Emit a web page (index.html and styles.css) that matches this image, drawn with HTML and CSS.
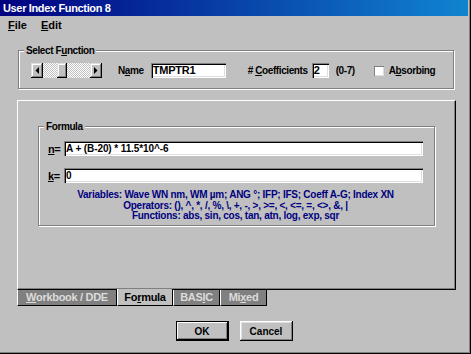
FILE: index.html
```html
<!DOCTYPE html>
<html lang="en">
<head>
    <meta charset="UTF-8">
    <title>User Index Function 8</title>
    <link rel="stylesheet" href="styles.css">
</head>
<body>
    <div class="window">
        <div class="titlebar">User Index Function 8</div>
        <div class="menubar">
            <span><u>F</u>ile</span>
            <span><u>E</u>dit</span>
        </div>

        <fieldset class="group select-group">
            <legend>Select F<u>u</u>nction</legend>
            <div class="select-row">
                <div class="scrollbar">
                    <div class="scroll-btn">
                        <svg width="4" height="7" viewBox="0 0 4 7"><path d="M4 0v7L0.5 3.5z"/></svg>
                    </div>
                    <div class="scroll-track"><div class="scroll-thumb"></div></div>
                    <div class="scroll-btn">
                        <svg width="4" height="7" viewBox="0 0 4 7"><path d="M0 0v7l3.5-3.5z"/></svg>
                    </div>
                </div>
                <span class="name-label">N<u>a</u>me</span>
                <div class="textbox name-box">TMPTR1</div>
                <span class="coef-label"># <u>C</u>oefficients</span>
                <div class="textbox coef-box">2</div>
                <span class="range">(0-7)</span>
                <span class="checkbox"></span>
                <span class="check-label">A<u>b</u>sorbing</span>
            </div>
        </fieldset>

        <div class="tabs">
            <div class="tab-page">
                <fieldset class="group formula-group">
                    <legend>Formula</legend>
                    <div class="field-row">
                        <span class="field-label"><u>n</u>=</span>
                        <div class="textbox formula-box">A + (B-20) * 11.5*10^-6</div>
                    </div>
                    <div class="field-row">
                        <span class="field-label"><u>k</u>=</span>
                        <div class="textbox formula-box">0</div>
                    </div>
                    <div class="help">
                        <div>Variables: Wave WN nm, WM µm; ANG °; IFP; IFS; Coeff A-G; Index XN</div>
                        <div>Operators: (), ^, *, /, %, \, +, -, &gt;, &gt;=, &lt;, &lt;=, =, &lt;&gt;, &amp;, |</div>
                        <div>Functions: abs, sin, cos, tan, atn, log, exp, sqr</div>
                    </div>
                </fieldset>
            </div>
            <div class="tab-strip">
                <div class="tab tab-workbook"><u>W</u>orkbook / DDE</div>
                <div class="tab tab-formula active">Fo<u>r</u>mula</div>
                <div class="tab tab-basic">BAS<u>I</u>C</div>
                <div class="tab tab-mixed">Mi<u>x</u>ed</div>
            </div>
        </div>

        <div class="buttons">
            <button class="btn default">OK</button>
            <button class="btn">Cancel</button>
        </div>
    </div>
</body>
</html>
```

FILE: styles.css
```css
* {
    box-sizing: border-box;
}

body {
    margin: 0;
    background-color: #c0c0c0;
    font-family: "Liberation Sans", Arial, sans-serif;
    font-weight: bold;
    font-size: 10px;
    letter-spacing: -0.4px;
    color: #000;
}

.window {
    width: 471px;
    height: 354px;
    padding: 0 3px 2px 0;
    display: flex;
    flex-direction: column;
    box-shadow: inset -1px -1px #000, inset -2px -2px #808080;
}

.titlebar {
    height: 16px;
    line-height: 16px;
    padding-left: 3px;
    color: #fff;
    font-size: 11px;
    letter-spacing: -0.35px;
    background: linear-gradient(to right, #000080, #1084d0);
}

.menubar {
    height: 18px;
    display: flex;
    align-items: center;
    gap: 14px;
    padding-left: 8px;
    font-size: 11px;
    letter-spacing: 0;
}

/* etched group boxes */
.group {
    margin: 0;
    padding: 0 0 0 5px;
    min-width: 0;
    border: 1px solid #808080;
    box-shadow: inset 1px 1px #fff, 1px 1px #fff;
}

.group legend {
    padding: 0 2px;
    line-height: 13px;
    background-color: #c0c0c0;
}

.select-group {
    margin: 10px 14px 0 18px;
    padding-bottom: 10px;
}

.select-row {
    display: flex;
    align-items: center;
    height: 15px;
    margin: 6px 0 0 7px;
    white-space: nowrap;
}

.scrollbar {
    display: flex;
    width: 71px;
    height: 15px;
}

.scroll-btn,
.scroll-thumb {
    background-color: #c0c0c0;
    box-shadow: inset -1px -1px #000, inset 1px 1px #dfdfdf, inset -2px -2px #808080, inset 2px 2px #fff;
}

.scroll-btn {
    width: 12px;
    display: flex;
    justify-content: center;
    align-items: center;
}

.scroll-track {
    flex: 1;
    display: flex;
    background: repeating-conic-gradient(#fff 0 25%, #c0c0c0 0 50%) 0 0 / 2px 2px;
}

.scroll-thumb {
    width: 10px;
    margin-left: 14px;
}

.textbox {
    height: 15px;
    line-height: 15px;
    padding-left: 2px;
    background-color: #fff;
    font-size: 11px;
    letter-spacing: -0.2px;
    white-space: nowrap;
    overflow: hidden;
    box-shadow: inset 1px 1px #808080, inset 2px 2px #000, inset -1px -1px #fff, inset -2px -2px #dfdfdf;
}

.name-label {
    margin-left: 16px;
}

.name-box {
    width: 75px;
    margin-left: 7px;
}

.coef-label {
    margin-left: 22px;
}

.coef-box {
    width: 17px;
    margin-left: 4px;
}

.range {
    margin-left: 7px;
}

.checkbox {
    width: 10px;
    height: 10px;
    margin-left: 19px;
    background-color: #fff;
    box-shadow: inset 1px 1px #808080, inset -1px -1px #dfdfdf;
}

.check-label {
    margin-left: 5px;
}

/* tab control, tabs on the bottom */
.tabs {
    margin: 11px 0 0 17px;
    width: 439px;
}

.tab-page {
    height: 190px;
    padding: 19px 20px 0 20px;
    border-top: 1px solid #fff;
    border-left: 1px solid #fff;
    border-right: 1px solid #000;
    border-bottom: 1px solid #000;
    box-shadow: inset -1px -1px #808080;
}

.formula-group {
    padding-bottom: 3px;
}

.field-row {
    display: flex;
    align-items: center;
    height: 15px;
    margin: 8px 11px 0 4px;
}

.field-row + .field-row {
    margin-top: 12px;
}

.field-label {
    width: 16px;
    font-size: 11px;
}

.field-row .textbox {
    flex: 1;
}

.formula-box {
    font-size: 10px;
    letter-spacing: -0.1px;
}

.help {
    margin: 7px 11px 0 4px;
    text-align: center;
    line-height: 10.5px;
    letter-spacing: -0.25px;
    color: #000080;
    white-space: nowrap;
}

.tab-strip {
    display: flex;
    height: 16px;
}

.tab {
    height: 16px;
    line-height: 14px;
    text-align: center;
    font-size: 11px;
    letter-spacing: -0.3px;
    color: #dcdcdc;
    background-color: #808080;
    border-left: 1px solid #fff;
    border-right: 1px solid #000;
    border-bottom: 1px solid #000;
}

.tab.active {
    color: #000;
    background-color: #c0c0c0;
    margin-top: -1px;
    height: 17px;
    line-height: 16px;
}

.tab-workbook { width: 100px; }
.tab-formula { width: 56px; }
.tab-basic { width: 47px; }
.tab-mixed { width: 47px; }

.buttons {
    display: flex;
    justify-content: center;
    gap: 11px;
    margin-top: 15px;
}

.btn {
    width: 53px;
    height: 20px;
    padding: 0;
    border: none;
    font: inherit;
    letter-spacing: 0;
    color: #000;
    background-color: #c0c0c0;
    box-shadow: inset -1px -1px #000, inset 1px 1px #fff, inset -2px -2px #808080, inset 2px 2px #dfdfdf;
}

.btn.default {
    box-shadow: inset 0 0 0 1px #000, inset -2px -2px #000, inset 2px 2px #fff, inset -3px -3px #808080;
}
```
